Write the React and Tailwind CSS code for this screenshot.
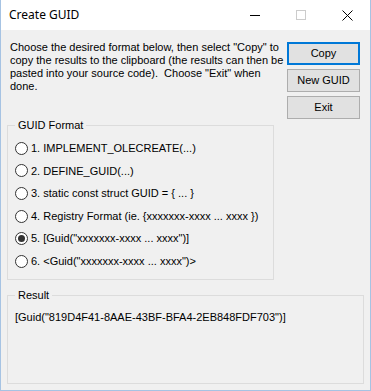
const formats = [
  '1. IMPLEMENT_OLECREATE(...)',
  '2. DEFINE_GUID(...)',
  '3. static const struct GUID = { ... }',
  '4. Registry Format (ie. {xxxxxxx-xxxx ... xxxx })',
  '5. [Guid("xxxxxxx-xxxx ... xxxx")]',
  '6. <Guid("xxxxxxx-xxxx ... xxxx")>',
]

const Radio = ({ checked, label }) => (
  <div className="flex items-center h-[22.6px]">
    <span className="w-[13px] h-[13px] rounded-full border border-[#333] bg-white flex items-center justify-center shrink-0">
      {checked && <span className="w-[7px] h-[7px] rounded-full bg-[#333]" />}
    </span>
    <span className="ml-[3px] whitespace-pre">{label}</span>
  </div>
)

const WinButton = ({ children, primary }) => (
  <button
    className={
      primary
        ? 'w-[73px] h-[23px] bg-[#e1e1e1] border-2 border-[#0078d7] text-[11px] leading-none text-black'
        : 'w-[73px] h-[23px] bg-[#e1e1e1] border border-[#adadad] text-[11px] leading-none text-black'
    }
  >
    {children}
  </button>
)

export default function App() {
  return (
    <div
      className="w-[371px] h-[391px] border-x border-b border-[#a6c3e3] bg-[#f0f0f0] flex flex-col text-black"
      style={{ fontFamily: '"Liberation Sans", Arial, sans-serif' }}
    >
      {/* title bar */}
      <div className="h-[30px] bg-white flex items-center shrink-0">
        <span
          className="ml-[8px] text-[12px] flex-1"
          style={{ fontFamily: '"Segoe UI", "Noto Sans", sans-serif' }}
        >
          Create GUID
        </span>
        <div className="flex h-full">
          <div className="w-[46px] h-full flex items-center justify-center">
            <svg width="10" height="10" viewBox="0 0 10 10">
              <line x1="0" y1="5.5" x2="10" y2="5.5" stroke="#000" strokeWidth="1" />
            </svg>
          </div>
          <div className="w-[46px] h-full flex items-center justify-center">
            <svg width="10" height="10" viewBox="0 0 10 10">
              <rect x="0.5" y="0.5" width="9" height="9" fill="none" stroke="#cccccc" strokeWidth="1" />
            </svg>
          </div>
          <div className="w-[46px] h-full flex items-center justify-center">
            <svg width="11" height="11" viewBox="0 0 11 11">
              <path d="M0.5 0.5 L10.5 10.5 M10.5 0.5 L0.5 10.5" stroke="#000" strokeWidth="1" />
            </svg>
          </div>
        </div>
      </div>

      {/* body */}
      <div className="flex-1 pt-[11px] px-[6px] text-[11px]">
        <div className="flex h-[78px]">
          <p className="ml-[3px] w-[272px] leading-[13px] whitespace-pre">
            {'Choose the desired format below, then select "Copy" to\ncopy the results to the clipboard (the results can then be\npasted into your source code).  Choose "Exit" when\ndone.'}
          </p>
          <div className="ml-[5px] mt-[1px] flex flex-col gap-[4px]">
            <WinButton primary>Copy</WinButton>
            <WinButton>New GUID</WinButton>
            <WinButton>Exit</WinButton>
          </div>
        </div>

        <fieldset className="w-[267px] h-[161px] border border-[#dcdcdc] px-[7px]">
          <legend className="px-[3px] leading-[13px]">GUID Format</legend>
          <div className="pt-[5px]">
            {formats.map((f, i) => (
              <Radio key={f} label={f} checked={i === 4} />
            ))}
          </div>
        </fieldset>

        <fieldset className="mt-[9px] w-[357px] h-[95px] border border-[#dcdcdc] px-[7px]">
          <legend className="px-[3px] leading-[13px]">Result</legend>
          <div className="pt-[9px] leading-[13px]">[Guid("819D4F41-8AAE-43BF-BFA4-2EB848FDF703")]</div>
        </fieldset>
      </div>
    </div>
  )
}
